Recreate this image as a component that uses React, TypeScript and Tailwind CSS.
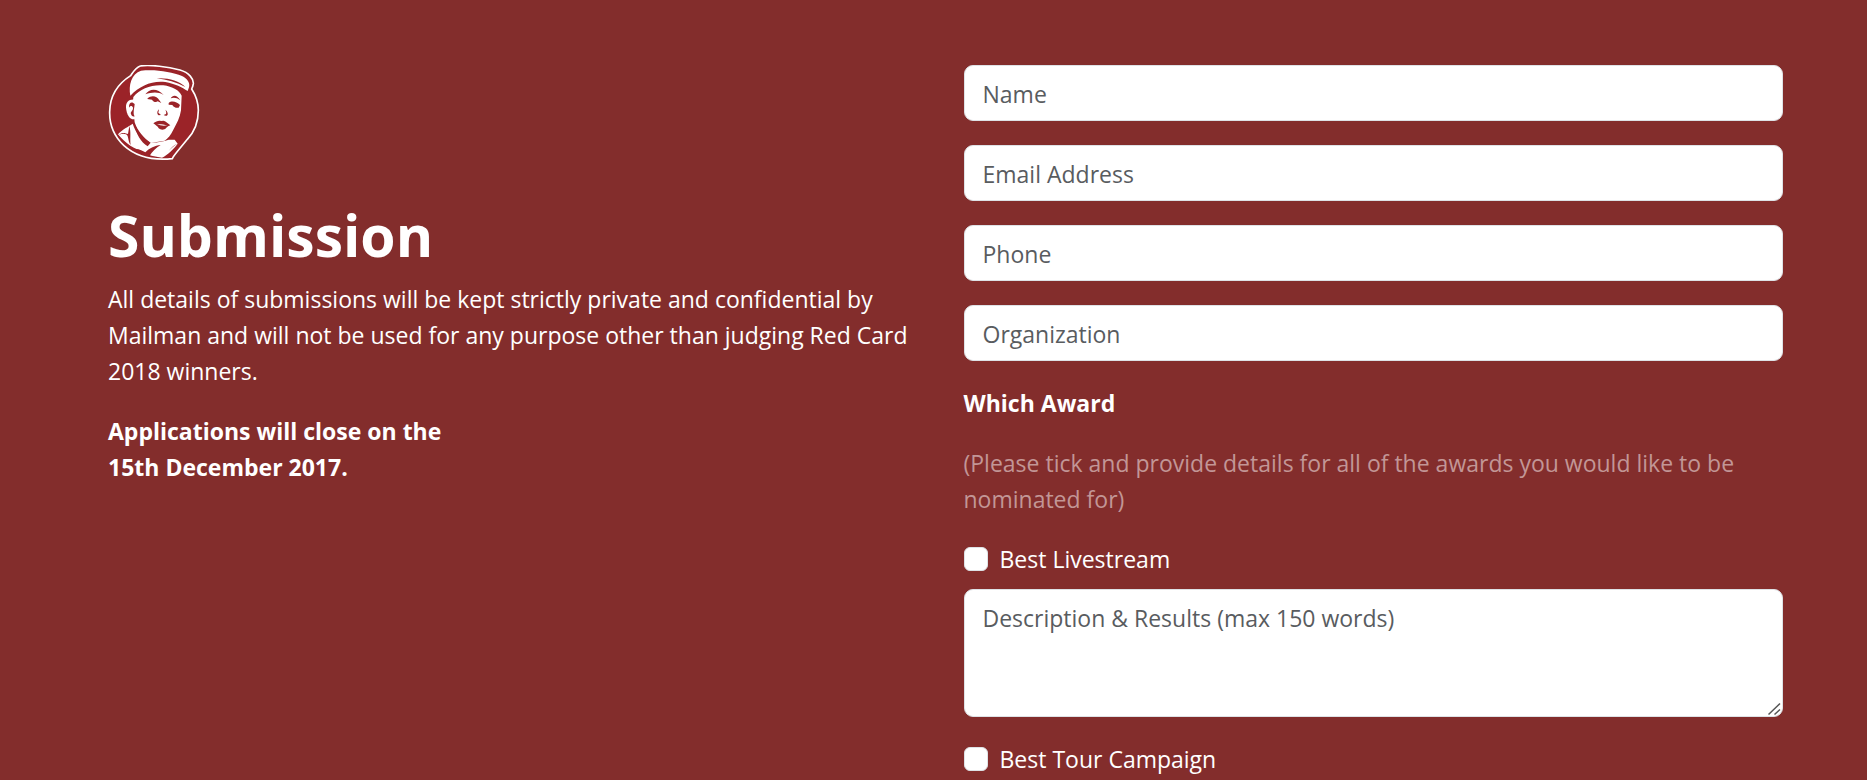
import { useId } from "react";

function Logo() {
  return (
    <svg viewBox="24 30 276 288" className="h-24 w-[92px]" role="img" aria-label="Mailman">
      <path
        d="M121 33C150 28 205 36 240 45C268 53 281 72 280 86C279 94 277 98 275 102C288 122 295 142 295 166C295 200 284 230 262 253C250 268 236 284 220 305L217 311C150 318 105 302 72 272C42 244 28 208 29 170C30 124 54 86 92 62C99 52 107 37 121 33Z"
        fill="#9b2328"
        stroke="#fff"
        strokeWidth="5"
      />
      <path
        d="M91 122C85 90 94 56 123 47C165 42 215 50 246 63C262 71 271 84 267 97L263 108C246 97 226 87 196 81C156 76 120 92 91 122Z"
        fill="#fff"
      />
      <path d="M170 70C200 67 238 77 256 96C230 82 200 74 170 70Z" fill="#9b2328" />
      <path
        d="M100 126C120 100 156 88 190 91C218 95 238 106 245 122L243 166C240 188 230 206 220 224C212 240 204 250 194 257L152 264C132 250 112 228 104 202L98 150Z"
        fill="#fff"
      />
      <path
        d="M104 134C86 132 77 142 78 158C80 178 88 194 103 193L110 186V138Z"
        fill="#fff"
      />
      <path
        d="M104 147C96 138 86 142 87 158C91 150 97 152 99 158C100 164 94 168 92 174C94 183 99 186 104 184C98 176 103 160 104 147Z"
        fill="#9b2328"
      />
      <path
        d="M54 238C68 222 84 216 98 206C108 236 124 254 144 268L136 292C104 284 76 266 54 238Z"
        fill="#fff"
      />
      <path
        d="M148 262C166 264 186 260 206 254L224 254L233 266C220 284 202 300 186 308C164 306 144 300 128 292L138 274Z"
        fill="#fff"
      />
      <path d="M88 213C94 232 89 252 92 270C82 256 87 242 78 238C70 235 64 236 57 240C66 230 78 236 84 237Z" fill="#9b2328" />
      <path d="M103 204C114 232 130 250 152 263L143 274C122 260 109 240 103 204Z" fill="#9b2328" />
      <path d="M106 282C120 282 128 288 136 292C150 278 164 272 182 270C168 278 156 290 148 304C132 300 118 292 106 282Z" fill="#9b2328" />
      <path d="M233 266C222 270 212 282 206 288C214 278 220 270 233 266Z" fill="#9b2328" />
      <path d="M136 118C148 100 172 98 191 120C174 109 154 112 136 118Z" fill="#9b2328" />
      <path d="M212 130C219 117 233 121 241 136C231 128 221 127 212 130Z" fill="#9b2328" />
      <path
        d="M142 131C154 120 170 122 178 136L184 144L173 139C169 143 160 142 156 134L142 132Z"
        fill="#9b2328"
      />
      <path
        d="M206 144C214 136 230 139 240 150L236 158C229 160 220 156 217 150L206 149Z"
        fill="#9b2328"
      />
      <path
        d="M196 164C201 168 204 172 203 179C200 184 195 183 191 180L198 177C200 173 198 168 196 164Z"
        fill="#9b2328"
      />
      <path d="M177 163L175 173L183 180L176 181C170 177 171 168 177 163Z" fill="#9b2328" />
      <path
        d="M160 205C168 199 176 196 183 198L191 197C198 199 205 206 211 211C206 213 202 215 199 218C193 226 182 225 176 220C173 214 167 210 160 205Z"
        fill="#9b2328"
      />
      <path d="M171 208C181 207 192 209 202 211C192 213 180 212 171 208Z" fill="#fff" />
    </svg>
  );
}

const fieldClass =
  "block w-full rounded-[9px] border border-[#dee2e6] bg-white px-[18px] pt-[10px] pb-2 text-[23px] leading-9 text-[#212529] placeholder:text-[#595c5f] placeholder:opacity-100";

function TextField({ label, type = "text" }: { label: string; type?: string }) {
  return <input type={type} aria-label={label} placeholder={label} className={`${fieldClass} h-14`} />;
}

function AwardOption({ name }: { name: string }) {
  const id = useId();
  return (
    <div className="flex items-start gap-3">
      <input
        id={id}
        type="checkbox"
        className="mt-1.5 size-6 shrink-0 appearance-none rounded-md border border-[#dee2e6] bg-white checked:bg-[#0d6efd]"
      />
      <label htmlFor={id}>{name}</label>
    </div>
  );
}

function DescriptionField({ label }: { label: string }) {
  return (
    <div className="relative">
      <textarea
        aria-label={label}
        placeholder="Description & Results (max 150 words)"
        className={`${fieldClass} h-32 resize-y [&::-webkit-resizer]:hidden`}
      />
      <svg
        viewBox="0 0 16 16"
        className="pointer-events-none absolute right-0 bottom-0 size-4"
        fill="none"
        stroke="#555"
        strokeWidth="1.5"
        aria-hidden="true"
      >
        <path d="M1.5 13.5L13 2.5M7.5 13.5L13 8.5" />
      </svg>
    </div>
  );
}

export default function App() {
  return (
    <main className="min-h-screen bg-[#832d2c] pt-[65px] pr-[84px] pl-[108px] font-['Open_Sans','Noto_Sans',sans-serif] text-[23px] leading-9 text-white">
      <div className="grid grid-cols-2 gap-9">
        <section>
          <Logo />
          <h1 className="mt-[38px] mb-[10px] text-[57px] leading-[72px] font-bold">Submission</h1>
          <p>
            All details of submissions will be kept strictly private and confidential by Mailman and
            will not be used for any purpose other than judging Red Card 2018 winners.
          </p>
          <p className="mt-6 font-bold">
            Applications will close on the
            <br />
            15th December 2017.
          </p>
        </section>

        <form className="flex flex-col gap-6">
          <TextField label="Name" />
          <TextField label="Email Address" type="email" />
          <TextField label="Phone" type="tel" />
          <TextField label="Organization" />
          <h2 className="font-bold">Which Award</h2>
          <p className="text-[#c29696]">
            (Please tick and provide details for all of the awards you would like to be nominated
            for)
          </p>
          <div className="flex flex-col gap-3">
            <AwardOption name="Best Livestream" />
            <DescriptionField label="Best Livestream description and results" />
          </div>
          <AwardOption name="Best Tour Campaign" />
        </form>
      </div>
    </main>
  );
}
